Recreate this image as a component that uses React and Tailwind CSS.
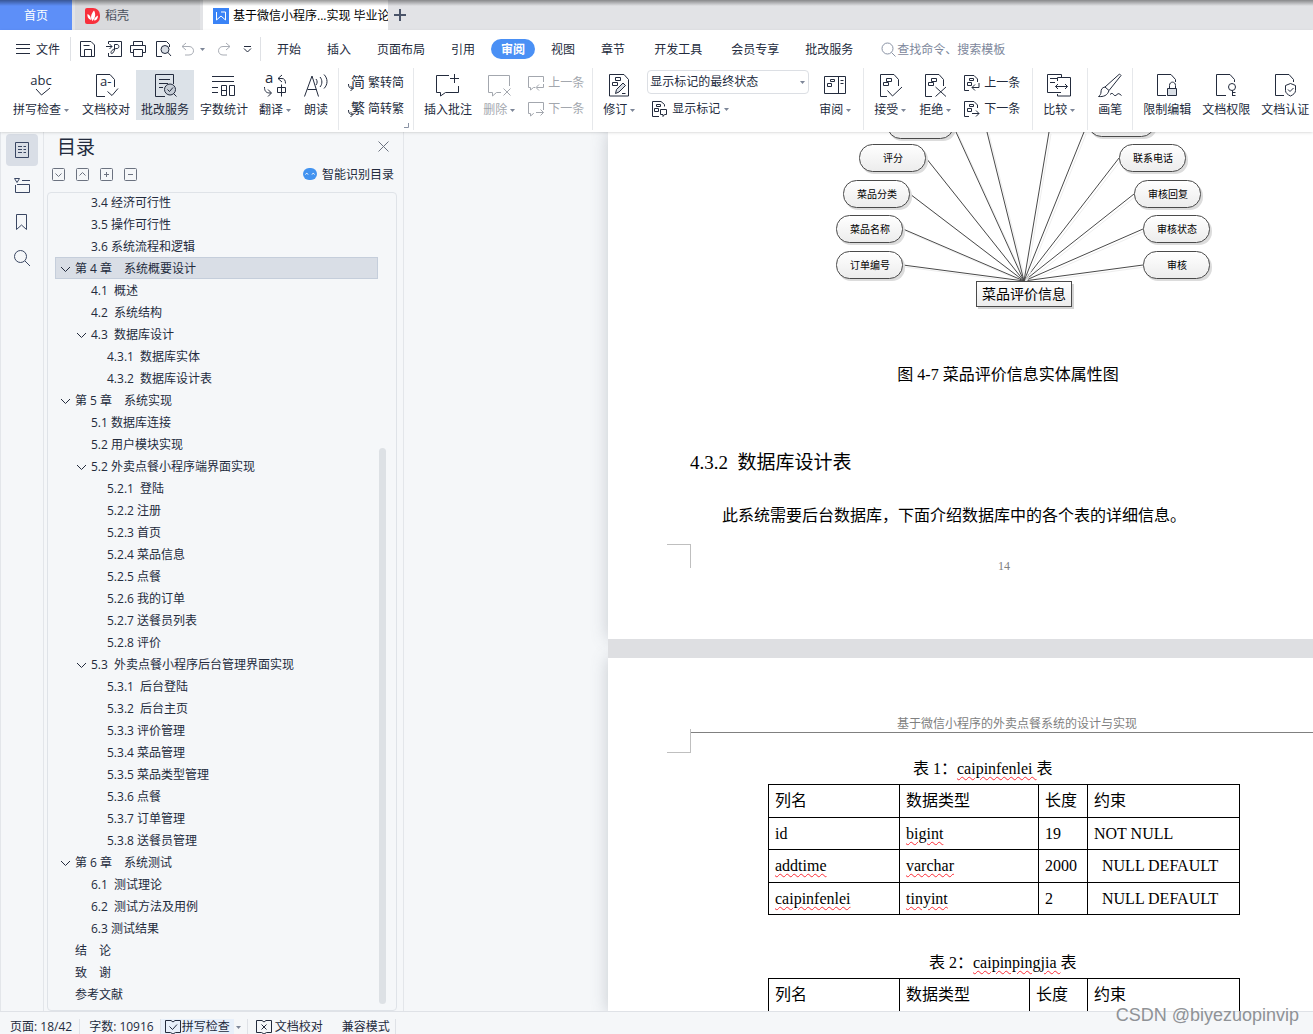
import React from "react";

const outline = [
    { level: 2, text: "3.4 经济可行性" },
    { level: 2, text: "3.5 操作可行性" },
    { level: 2, text: "3.6 系统流程和逻辑" },
    { level: 1, text: "第 4 章　系统概要设计", open: true, active: true },
    { level: 2, text: "4.1  概述" },
    { level: 2, text: "4.2  系统结构" },
    { level: 2, text: "4.3  数据库设计", open: true },
    { level: 3, text: "4.3.1  数据库实体" },
    { level: 3, text: "4.3.2  数据库设计表" },
    { level: 1, text: "第 5 章　系统实现", open: true },
    { level: 2, text: "5.1 数据库连接" },
    { level: 2, text: "5.2 用户模块实现" },
    { level: 2, text: "5.2 外卖点餐小程序端界面实现", open: true },
    { level: 3, text: "5.2.1  登陆" },
    { level: 3, text: "5.2.2 注册" },
    { level: 3, text: "5.2.3 首页" },
    { level: 3, text: "5.2.4 菜品信息" },
    { level: 3, text: "5.2.5 点餐" },
    { level: 3, text: "5.2.6 我的订单" },
    { level: 3, text: "5.2.7 送餐员列表" },
    { level: 3, text: "5.2.8 评价" },
    { level: 2, text: "5.3  外卖点餐小程序后台管理界面实现", open: true },
    { level: 3, text: "5.3.1  后台登陆" },
    { level: 3, text: "5.3.2  后台主页" },
    { level: 3, text: "5.3.3 评价管理" },
    { level: 3, text: "5.3.4 菜品管理" },
    { level: 3, text: "5.3.5 菜品类型管理" },
    { level: 3, text: "5.3.6 点餐" },
    { level: 3, text: "5.3.7 订单管理" },
    { level: 3, text: "5.3.8 送餐员管理" },
    { level: 1, text: "第 6 章　系统测试", open: true },
    { level: 2, text: "6.1  测试理论" },
    { level: 2, text: "6.2  测试方法及用例" },
    { level: 2, text: "6.3 测试结果" },
    { level: 1, text: "结　论" },
    { level: 1, text: "致　谢" },
    { level: 1, text: "参考文献" },
];

const levelPad = { 1: "pl-1", 2: "pl-5", 3: "pl-9" };

const Svg = ({ w = 24, h = 24, className = "", children }) => (
    <svg
        width={w}
        height={h}
        viewBox={`0 0 ${w} ${h}`}
        fill="none"
        stroke="currentColor"
        aria-hidden="true"
        className={`shrink-0 overflow-visible ${className}`}
    >
        {children}
    </svg>
);

const Caret = ({ className = "" }) => (
    <Svg w={5} h={3} className={`text-[#7d8698] ${className}`}>
        <path d="M0 0h5L2.5 3z" fill="currentColor" stroke="none" />
    </Svg>
);

// page with revision bars, shared by several review commands
const RevPage = () => (
    <>
        <path d="M9 23.500H2.500V1.500H16l4.500 5V13" />
        <path d="M8.500 5.500h5v3h-5zM5.500 9.500h5v3h-5z" />
    </>
);

const SmallRevPage = () => (
    <>
        <path d="M5 15.500H.5V.5H10l3.500 3.500v3" />
        <path d="M5.500 3.500h4v2h-4zM3.500 7.500h4v3h-4z" />
    </>
);

const icons = {
    spell: (
        <Svg>
            <text x="12" y="12" textAnchor="middle" fontSize="13" fill="currentColor" stroke="none">abc</text>
            <path d="M7 16l5.500 6L21 15" />
        </Svg>
    ),
    proof: (
        <Svg>
            <path d="M11 23.500H2.500V1.500H16l4.500 5V14M13.500 18.500l4.500 4 6-7" />
            <text x="6" y="13" fontSize="13" fill="currentColor" stroke="none">a-</text>
        </Svg>
    ),
    service: (
        <Svg>
            <path d="M12 23.500H2.500V1.500h18V11M6 6.500h11M6 10.500h9M6 14.500h4" />
            <circle cx="17" cy="16.500" r="5.500" fill="#c5ccd5" />
            <path d="M14.500 16.500l2 2 3.500-4M20.500 20.500l3 3" />
        </Svg>
    ),
    count: (
        <Svg>
            <path d="M0 3.500h22M0 8.500h22M0 14.500h6M0 19.500h6M9.500 12.500h5v10h-5zM9.500 17.500h5M17.500 12.500h5v10h-5z" />
        </Svg>
    ),
    translate: (
        <Svg>
            <text x="2" y="10" fontSize="15" fill="currentColor" stroke="none">a</text>
            <path d="M14.500 14.500h8v5h-8zM18.500 11.500v12M19 2l-4 3.500 4 3.500M15 5.500h4c2.500 0 3.500 2 3.500 5M1.500 14c0 4 1.500 6 5.500 6h1M5 16.500L8.500 20 5 23.500" />
        </Svg>
    ),
    read: (
        <Svg>
            <path d="M.5 23.500L8 3l6.500 20.500M3.500 16.500h9M12 6c1.500 2 1.500 4 0 6M16 4c2.500 3 2.500 7 0 10M20 1.500c4 4 4 10 0 14" />
        </Svg>
    ),
    toSimple: (
        <Svg w={16} h={16}>
            <text x="3" y="12" fontSize="14" fill="currentColor" stroke="none">简</text>
            <path d="M.5 9c0 3 1 4.500 4 4.500M2.500 11L5 13.500 2.500 16" />
        </Svg>
    ),
    toTrad: (
        <Svg w={16} h={16}>
            <text x="3" y="12" fontSize="14" fill="currentColor" stroke="none">繁</text>
            <path d="M.5 9c0 3 1 4.500 4 4.500M2.500 11L5 13.500 2.500 16" />
        </Svg>
    ),
    comment: (
        <Svg>
            <path d="M13 2.500H.5v17h4V23l5-3.500h13V13M14 5.500h9M18.500 1v9" />
        </Svg>
    ),
    removeComment: (
        <Svg>
            <path d="M14 19.500H9.500L5.500 23v-3.500h-4v-17h21V13M16.500 15.500l7 7M23.500 15.500l-7 7" />
        </Svg>
    ),
    prevComment: (
        <Svg w={16} h={16}>
            <path d="M7 12.500H5.500L2.500 15v-2.500H.5V1.500h15V7M15.500 9v3.500h-7M11 9.500l-3 3 3 3" />
        </Svg>
    ),
    nextComment: (
        <Svg w={16} h={16}>
            <path d="M6 12.500H5.500L2.500 15v-2.500H.5V1.500h15V9M8 11.500h7.500M12.500 8.500l3 3-3 3" />
        </Svg>
    ),
    revise: (
        <Svg>
            <path d="M2.500 1.500H17l4.500 5v16.500h-19zM8.500 4.500h5v3h-5zM5.500 9.500h5v3h-5z" />
            <path d="M8.500 20.500l1-4 6.500-6.500 2.500 2.500-6.500 6.500z" fill="#d9dee5" />
            <path d="M15 20.500h3.500" />
        </Svg>
    ),
    showMark: (
        <Svg w={16} h={16}>
            <path d="M7 15.500H.5V.5H9l3.500 3v2M4.500 3.500h4v2h-4zM2.500 7.500h4v3h-4zM8.500 8.500h6v5h-2l-1.500 2v-2H8.500z" />
        </Svg>
    ),
    panes: (
        <Svg>
            <path d="M1.500 3.500h21v17h-21zM15.500 3.500v17M17.500 7.500h3M17.500 10.500h3M7.500 6.500h4v2h-4zM4.500 10.500h4v3h-4z" />
        </Svg>
    ),
    accept: (
        <Svg>
            <RevPage />
            <path d="M9.500 17.500l5 5.500L24 14" />
        </Svg>
    ),
    reject: (
        <Svg>
            <RevPage />
            <path d="M12.500 14l10.500 9.500M23 14L12.500 23.500" />
        </Svg>
    ),
    prevRev: (
        <Svg w={16} h={16}>
            <SmallRevPage />
            <path d="M15 8v4.500H8M11 9.500l-3 3 3 3" />
        </Svg>
    ),
    nextRev: (
        <Svg w={16} h={16}>
            <SmallRevPage />
            <path d="M8 12.500h7M12 9.500l3 3-3 3" />
        </Svg>
    ),
    compare: (
        <Svg>
            <path d="M14 19.500H.5v-18h14v3M3 5.500h8M3 9.500h5M10.500 8v-3.500h13v18.500h-13V21M8.500 13.500h12M11 11l-2.500 2.500L11 16M18 11l2.500 2.500L18 16" />
        </Svg>
    ),
    brush: (
        <Svg>
            <path d="M7 14L21.500 1l1.500 1.500L11 17.500M7 14l4 3.500M7 14c-3 .5-4 2.500-4 5 0 2-1 3.500-2.500 4.500 5 .5 9-1 10.500-6M12 21.500c1.500-1.500 2.500-1.500 3.500 0s2 1.500 3.500 0 2-1 4.500 1" />
        </Svg>
    ),
    lock: (
        <Svg>
            <path d="M11 22.500H2.500V1.500H16l4.500 5V9" />
            <path d="M14.500 15v-2.500c0-4.500 6-4.500 6 0V15" />
            <path d="M12.500 15.500h9v7h-9z" fill="#d9dee5" />
        </Svg>
    ),
    key: (
        <Svg>
            <path d="M12 22.500H2.500V1.500H16l4.500 5V9" />
            <circle cx="18" cy="14" r="3.500" />
            <path d="M18.500 17.500V23M18.500 22.500h3M18.500 19.500h3" />
        </Svg>
    ),
    shield: (
        <Svg>
            <path d="M11 22.500H2.500V1.500H16l4.500 5V9M17.500 10.500l5 2v5c0 2.500-2 4-5 5.500-3-1.500-5-3-5-5.500v-5zM15 16.500l2 2 3.500-3.500" />
        </Svg>
    ),
};

const BigButton = ({ icon, label, menu, active, disabled }) => (
    <button
        type="button"
        disabled={disabled}
        className={`flex h-[50px] shrink-0 flex-col items-center gap-[5px] px-[5px] pt-[3px] ${menu ? "mr-0.5" : ""} ${active ? "bg-[#dce2e8]" : ""} ${disabled ? "text-[#a3a7ae]" : ""}`}
    >
        {icons[icon]}
        <span className="flex items-center gap-[3px] leading-4">
            {label}
            {menu && <Caret />}
        </span>
    </button>
);

const RowButton = ({ icon, label, disabled, menu }) => (
    <button
        type="button"
        disabled={disabled}
        className={`flex h-6 shrink-0 items-center gap-1 ${disabled ? "text-[#a3a7ae]" : ""}`}
    >
        {icons[icon]}
        <span>{label}</span>
        {menu && <Caret />}
    </button>
);

const RowPair = ({ children, className = "pt-px" }) => (
    <div className={`flex flex-col gap-0.5 ${className}`}>{children}</div>
);

const Group = ({ children, last, className = "px-[5px]" }) => (
    <div className={`relative flex h-[62px] shrink-0 gap-px pt-0.5 ${last ? "" : "border-r border-[#e6e8eb]"} ${className}`}>
        {children}
    </div>
);

const TitleTabs = () => (
    <div className="relative flex h-[30px] shrink-0 bg-[#e2e3e6] text-xs">
        <button type="button" className="w-[72px] bg-[#5d8ff8] pt-0.5 text-white">首页</button>
        <button type="button" className="ml-[3px] flex w-[125px] items-center gap-1 bg-[#d9dadd] pl-2.5 pt-0.5 text-[#4a505c]">
            <Svg w={16} h={16}>
                <path d="M0 2a2 2 0 012-2h6a7 7 0 017 7v2a7 7 0 01-7 7H2a2 2 0 01-2-2z" fill="#f8303c" stroke="none" />
                <path d="M7.500 13C5 10 6 6 9 2.500c2 3.500 1.500 7.500-1.500 10.500zM6 12C3 11 2 8.500 2.500 6 5 7 6 9 6 12zM9 12.500c0-2 1.500-4 4-5 0 3-1.500 5-4 5z" fill="#fff" stroke="none" />
            </Svg>
            稻壳
        </button>
        <button type="button" className="ml-[3px] flex w-[185px] items-center gap-1 overflow-hidden bg-white pl-2.5 pt-0.5 text-black">
            <Svg w={16} h={16}>
                <path d="M0 0h16v16H0z" fill="#3a83f6" stroke="none" />
                <path d="M3.500 4v8l4.500-4 4.500 4V4H8" stroke="#fff" />
            </Svg>
            <span className="whitespace-nowrap">基于微信小程序...实现 毕业论文</span>
        </button>
        <button type="button" aria-label="新建标签" className="pl-1.5 text-[#4a5468]">
            <Svg w={12} h={12}>
                <path d="M6 0v12M0 6h12" strokeWidth="2" />
            </Svg>
        </button>
        <div className="absolute inset-x-0 top-0 h-1.5 bg-linear-to-b from-black/40 to-transparent" />
    </div>
);

const MenuBar = () => (
    <div className="flex h-[38px] shrink-0 items-center">
        <button type="button" className="flex items-center gap-1.5 pl-4 pr-2.5">
            <Svg w={14} h={12}>
                <path d="M0 1.500h14M0 5.500h14M0 10.500h14" />
            </Svg>
            <span className="pt-0.5">文件</span>
        </button>
        <div className="flex h-6 items-center border-x border-[#dfe1e5] pl-[9px] pr-2">
            <button type="button" aria-label="保存">
                <Svg w={16} h={16}>
                    <path d="M.5 3v12.500h14V4L11 .5H.5V3M4.500 15V8.500h7V15M3.500 4.500h6" />
                </Svg>
            </button>
            <button type="button" aria-label="输出为PDF" className="ml-2.5">
                <Svg w={16} h={16}>
                    <path d="M2.500 3V.5h13v15h-13V12M0 5.500h6M3.500 3L6 5.500 3.500 8M8.500 9V3.500h2.500c2.500 0 2.500 4 0 4-3 0-6 2-6 4s2 1.500 3.500-2.500" />
                </Svg>
            </button>
            <button type="button" aria-label="打印" className="ml-2">
                <Svg w={16} h={16}>
                    <path d="M3.500 4.500v-4h9v4M3.500 11.500h-3v-7h15v7h-3M3.500 8.500h9v7h-9z" />
                </Svg>
            </button>
            <button type="button" aria-label="打印预览" className="ml-2.5">
                <Svg w={16} h={16}>
                    <path d="M6 15.500H.5V.5h10l3 3V6" />
                    <circle cx="9" cy="8.500" r="4" fill="#d9dee5" />
                    <path d="M12 11.500l3 3.500" />
                </Svg>
            </button>
            <button type="button" aria-label="撤销" className="ml-[9px] flex items-center gap-[5px] text-[#a9adb5]">
                <Svg w={14} h={14}>
                    <path d="M5 1L1 4.500 5 8M1 4.500h7c6 0 6 8.500 0 8.500H4" />
                </Svg>
                <Caret />
            </button>
            <button type="button" aria-label="恢复" className="ml-3 text-[#a9adb5]">
                <Svg w={14} h={14}>
                    <path d="M9 1l4 3.500L9 8M13 4.500H6c-6 0-6 8.500 0 8.500h4" />
                </Svg>
            </button>
            <button type="button" aria-label="自定义" className="ml-3">
                <Svg w={9} h={8}>
                    <path d="M1 1.500h7M1 3.500l3.500 3.500L8 3.500" />
                </Svg>
            </button>
        </div>
        <nav className="flex shrink-0 items-center gap-[26px] whitespace-nowrap pl-4 [&>button]:pt-0.5">
            <button type="button">开始</button>
            <button type="button">插入</button>
            <button type="button">页面布局</button>
            <button type="button">引用</button>
            <button type="button" className="-mx-2.5 h-5 rounded-full bg-[#4a90f5] px-2.5 font-bold leading-4 text-white">审阅</button>
            <button type="button">视图</button>
            <button type="button">章节</button>
            <button type="button" className="mx-[3px]">开发工具</button>
            <button type="button">会员专享</button>
            <button type="button">批改服务</button>
        </nav>
        <label className="ml-7 flex items-center gap-px text-[#8a93a5]">
            <Svg w={15} h={15}>
                <circle cx="6.500" cy="6.500" r="5.500" />
                <path d="M10.500 10.500l4 4" />
            </Svg>
            <input
                type="text"
                aria-label="查找命令"
                placeholder="查找命令、搜索模板"
                className="w-32 bg-transparent pt-0.5 placeholder:text-[#7d879b] focus:outline-none"
            />
        </label>
    </div>
);

const Ribbon = () => (
    <div className="flex h-16 shrink-0 whitespace-nowrap">
        <Group className="pl-2 pr-[5px]">
            <BigButton icon="spell" label="拼写检查" menu />
            <BigButton icon="proof" label="文档校对" />
            <BigButton icon="service" label="批改服务" active />
            <BigButton icon="count" label="字数统计" />
            <BigButton icon="translate" label="翻译" menu />
            <BigButton icon="read" label="朗读" />
        </Group>
        <Group className="pl-[9px] pr-[9px]">
            <RowPair>
                <RowButton icon="toSimple" label="繁转简" />
                <RowButton icon="toTrad" label="简转繁" />
            </RowPair>
            <Svg w={5} h={5} className="absolute bottom-0.5 right-1 text-[#8a93a5]">
                <path d="M4.500 0v4.500H0" />
            </Svg>
        </Group>
        <Group className="pl-[5px] pr-2">
            <BigButton icon="comment" label="插入批注" />
            <BigButton icon="removeComment" label="删除" menu disabled />
            <RowPair className="pl-[5px] pt-px">
                <RowButton icon="prevComment" label="上一条" disabled />
                <RowButton icon="nextComment" label="下一条" disabled />
            </RowPair>
        </Group>
        <Group>
            <BigButton icon="revise" label="修订" menu />
            <RowPair className="pl-1 pr-1">
                <div className="relative h-6">
                    <select
                        aria-label="标记显示方式"
                        className="h-6 w-[162px] appearance-none rounded-sm border border-[#dcdfe4] bg-white pl-0.5"
                    >
                        <option>显示标记的最终状态</option>
                    </select>
                    <Caret className="pointer-events-none absolute right-1 top-[11px]" />
                </div>
                <div className="pl-[5px] pt-px">
                    <RowButton icon="showMark" label="显示标记" menu />
                </div>
            </RowPair>
            <BigButton icon="panes" label="审阅" menu />
        </Group>
        <Group className="pl-[5px] pr-3">
            <BigButton icon="accept" label="接受" menu />
            <BigButton icon="reject" label="拒绝" menu />
            <RowPair className="pl-[5px] pt-px">
                <RowButton icon="prevRev" label="上一条" />
                <RowButton icon="nextRev" label="下一条" />
            </RowPair>
        </Group>
        <Group>
            <BigButton icon="compare" label="比较" menu />
        </Group>
        <Group>
            <BigButton icon="brush" label="画笔" />
        </Group>
        <Group last>
            <BigButton icon="lock" label="限制编辑" />
            <BigButton icon="key" label="文档权限" />
            <BigButton icon="shield" label="文档认证" />
        </Group>
    </div>
);

const SideRail = () => (
    <div className="flex w-11 shrink-0 flex-col items-center gap-1 border-x border-[#e3e6ea] pt-0.5 text-[#3a4763]">
        <button type="button" aria-label="目录" className="flex size-8 items-center justify-center rounded-sm bg-[#d9dee6]">
            <Svg w={16} h={16}>
                <path d="M1.500.5h13v15h-13zM4 4.500h4M9.500 4.500H12M4 7.500h4M9.500 7.500H12M4 10.500h4M9.500 10.500H12" />
            </Svg>
        </button>
        <button type="button" aria-label="章节" className="flex size-8 items-center justify-center">
            <Svg w={16} h={16}>
                <path d="M.5.5h5L3 4.500zM8 2.500h8M1.500 7v7.500h14v-8H3" />
            </Svg>
        </button>
        <button type="button" aria-label="书签" className="flex size-8 items-center justify-center">
            <Svg w={16} h={18}>
                <path d="M2.500 1.500h10v15l-5-4.500-5 4.500z" />
            </Svg>
        </button>
        <button type="button" aria-label="查找" className="flex size-8 items-center justify-center">
            <Svg w={16} h={16}>
                <circle cx="6.500" cy="6.500" r="6" />
                <path d="M11 11l5 5" />
            </Svg>
        </button>
    </div>
);

const BoxButton = ({ label, d }) => (
    <button type="button" aria-label={label} className="text-[#6b7280]">
        <Svg w={13} h={13}>
            <rect x=".5" y=".5" width="12" height="12" rx="1" />
            <path d={d} />
        </Svg>
    </button>
);

const OutlinePanel = () => (
    <aside className="flex w-[360px] shrink-0 flex-col border-r border-[#e3e6ea] pl-[3px] pr-1.5">
        <div className="flex h-7 items-center justify-between pl-2.5 pr-2">
            <h2 className="pt-1 text-[19px]">目录</h2>
            <button type="button" aria-label="关闭" className="text-[#6b7280]">
                <Svg w={11} h={11}>
                    <path d="M.5.5l10 10M10.500.5l-10 10" />
                </Svg>
            </button>
        </div>
        <div className="flex h-8 items-center gap-[11px] pb-1 pl-[5px] pr-[3px]">
            <BoxButton label="展开" d="M3.500 5.500l3 3 3-3" />
            <BoxButton label="收起" d="M3.500 7.500l3-3 3 3" />
            <BoxButton label="增加级别" d="M4 6.500h5M6.500 4v5" />
            <BoxButton label="减少级别" d="M4 6.500h5" />
            <button type="button" className="ml-auto flex items-center gap-[5px]">
                <Svg w={14} h={12}>
                    <rect x="0" y="0" width="14" height="12" rx="6" fill="#4293f0" stroke="none" />
                    <path d="M2.500 6.500c.5-1.500 2-1.500 2.500 0M9 6.500c.5-1.500 2-1.500 2.500 0" stroke="#fff" />
                </Svg>
                <span className="pt-px">智能识别目录</span>
            </button>
        </div>
        <div className="relative min-h-0 flex-1 overflow-hidden rounded-sm border border-[#dfe3e8] pl-[7px] pr-[18px]">
            <ul className="-mt-0.5">
                {outline.map((item) => (
                    <li key={item.text}>
                        <button
                            type="button"
                            className={`flex h-[22px] w-full items-center gap-1 whitespace-pre border pt-0.5 ${levelPad[item.level]} ${item.active ? "border-[#c5cedb] bg-[#d9dee6]" : "border-transparent"}`}
                        >
                            <Svg w={11} h={7} className={item.open ? "" : "invisible"}>
                                <path d="M1 1l4.500 4.500L10 1" />
                            </Svg>
                            {item.text}
                        </button>
                    </li>
                ))}
            </ul>
            <div className="absolute bottom-1.5 right-2.5 h-[68%] w-[7px] rounded-full bg-[#dde1e5]" />
        </div>
    </aside>
);

const nodes = [
    { x: 887, y: 111, label: "" },
    { x: 1088, y: 109, label: "" },
    { x: 859, y: 144, label: "评分" },
    { x: 843, y: 180, label: "菜品分类" },
    { x: 836, y: 215, label: "菜品名称" },
    { x: 836, y: 251, label: "订单编号" },
    { x: 1119, y: 144, label: "联系电话" },
    { x: 1134, y: 180, label: "审核回复" },
    { x: 1143, y: 215, label: "审核状态" },
    { x: 1143, y: 251, label: "审核" },
];

const links = [
    [926, 158], [910, 194], [903, 229], [903, 265],
    [1119, 158], [1134, 194], [1143, 229], [1143, 265],
    [956, 132], [987, 132], [1049, 132], [1084, 132],
];

const EntityDiagram = () => (
    <svg width="390" height="181" viewBox="830 132 390 181" className="ml-[140px] block">
        <defs>
            <linearGradient id="nodeFill" x1="0" y1="0" x2="0" y2="1">
                <stop offset="0" stopColor="#ffffff" />
                <stop offset="1" stopColor="#ececec" />
            </linearGradient>
        </defs>
        {links.map(([x, y]) => (
            <g key={`${x}-${y}`}>
                <path d={`M${x + 2} ${y + 2}L1026 283`} stroke="#eeeeee" />
                <path d={`M${x} ${y}L1024 281`} stroke="#4a4a4a" />
            </g>
        ))}
        {nodes.map((n) => (
            <g key={`${n.x}-${n.y}`}>
                <rect x={n.x + 2} y={n.y + 3} width="67" height="27" rx="13" fill="#dcdcdc" />
                <rect x={n.x + 0.5} y={n.y + 0.5} width="66" height="27" rx="13" fill="url(#nodeFill)" stroke="#4a4a4a" />
                {n.label && (
                    <text x={n.x + 34} y={n.y + 18} textAnchor="middle" fontSize="10">{n.label}</text>
                )}
            </g>
        ))}
        <rect x="978" y="284" width="96" height="25" fill="#d4d4d4" />
        <rect x="976.500" y="281.500" width="95" height="25" fill="url(#nodeFill)" stroke="#4a4a4a" />
        <text x="1024" y="299" textAnchor="middle" fontSize="14">菜品评价信息</text>
    </svg>
);

const Misspelt = ({ children }) => (
    <span className="underline decoration-red-500 decoration-wavy decoration-1 underline-offset-2">{children}</span>
);

const Paper = ({ children }) => (
    <section className="relative w-[794px] shrink-0 bg-white pl-[82px] pr-[76px] shadow-[0_0_16px_rgba(90,100,115,0.3)]">
        {children}
    </section>
);

const cell = "border border-black px-1.5 text-left font-normal whitespace-pre";

const FieldTable = ({ cols, rows = [] }) => (
    <table className="ml-[78px] w-[471px] table-fixed border-collapse">
        <colgroup>
            {cols.map((c, i) => (
                <col key={i} className={c} />
            ))}
        </colgroup>
        <thead>
            <tr className="h-[33px]">
                <th className={cell}>列名</th>
                <th className={cell}>数据类型</th>
                <th className={cell}>长度</th>
                <th className={cell}>约束</th>
            </tr>
        </thead>
        <tbody>
            {rows.map(([name, type, size, rule]) => (
                <tr key={name} className="h-[33px] odd:h-8">
                    <td className={cell}>{name === "id" ? name : <Misspelt>{name}</Misspelt>}</td>
                    <td className={cell}><Misspelt>{type}</Misspelt></td>
                    <td className={cell}>{size}</td>
                    <td className={cell}>{rule}</td>
                </tr>
            ))}
        </tbody>
    </table>
);

const DocumentView = () => (
    <main className="flex min-w-0 flex-1 flex-col overflow-hidden pl-[204px] font-['Liberation_Serif','Noto_Sans_CJK_SC',serif] text-base leading-6 text-black">
        <Paper>
            <EntityDiagram />
            <p className="mt-[50px] text-center">图 4-7 菜品评价信息实体属性图</p>
            <h3 className="mt-16 whitespace-pre text-[19px]">4.3.2  数据库设计表</h3>
            <p className="mt-[29px] indent-8">此系统需要后台数据库，下面介绍数据库中的各个表的详细信息。</p>
            <div className="absolute bottom-[71px] left-[59px] size-6 border-r border-t border-[#bfbfbf]" />
            <p className="mt-[26px] pb-[61px] pr-2 text-center text-xs leading-6 text-[#808080]">14</p>
        </Paper>
        <div className="z-10 h-[19px] w-[794px] shrink-0 bg-[#dedfe2]" />
        <Paper>
            <div className="absolute left-[59px] top-[71px] size-6 border-b border-r border-[#bfbfbf]" />
            <header className="border-b border-[#808080] pl-[18px] pt-[58px] text-center text-xs leading-4 text-[#808080]">
                基于微信小程序的外卖点餐系统的设计与实现
            </header>
            <p className="ml-[223px] mt-6">表 1：<Misspelt>caipinfenlei </Misspelt>表</p>
            <div className="mt-[3px]">
                <FieldTable
                    cols={["w-[131px]", "w-[139px]", "w-[49px]", "w-[152px]"]}
                    rows={[
                        ["id", "bigint", "19", "NOT NULL"],
                        ["addtime", "varchar", "2000", "  NULL DEFAULT"],
                        ["caipinfenlei", "tinyint", "2", "  NULL DEFAULT"],
                    ]}
                />
            </div>
            <p className="ml-[239px] mt-9">表 2：<Misspelt>caipinpingjia </Misspelt>表</p>
            <div className="mt-[3px]">
                <FieldTable cols={["w-[131px]", "w-[130px]", "w-[58px]", "w-[152px]"]} />
            </div>
        </Paper>
    </main>
);

const StatusBar = () => (
    <footer className="relative z-10 flex h-[23px] shrink-0 items-center whitespace-nowrap border-t border-[#dfe2e7] bg-[#f5f7f9] pl-2.5 pt-2">
        <span className="border-r border-[#dfe2e7] pr-[7px]">页面: 18/42</span>
        <span className="border-r border-[#dfe2e7] pl-[9px] pr-1.5">字数: 10916</span>
        <button type="button" className="flex items-center gap-px bg-[#e8f0fa] px-1">
            <Svg w={16} h={14}>
                <path d="M6 .5H.5v12h5L8 14l2.500-1.500h5V.5H10L8 2 6 .5M4.500 6.500l3 3 4.500-5" />
            </Svg>
            拼写检查
        </button>
        <span className="flex h-4 items-center border-r border-[#dfe2e7] pl-0.5 pr-1.5"><Caret /></span>
        <button type="button" className="flex items-center gap-[3px] pl-2">
            <Svg w={16} h={14}>
                <path d="M6 .5H.5v12h5L8 14l2.500-1.500h5V.5H10L8 2 6 .5M5.500 4.500l5 5M10.500 4.500l-5 5" />
            </Svg>
            文档校对
        </button>
        <span className="ml-[19px] border-r border-[#dfe2e7] pr-[5px]">兼容模式</span>
        <div className="pointer-events-none absolute -top-[9px] right-3.5 font-['Liberation_Sans',sans-serif] text-[18px] leading-6 text-[#8f9296]">
            CSDN @biyezuopinvip
        </div>
    </footer>
);

export default function App() {
    return (
        <div className="flex h-screen flex-col overflow-hidden bg-[#f5f7f9] font-['Open_Sans','Noto_Sans_CJK_SC',sans-serif] text-xs text-[#232b3d]">
            <TitleTabs />
            <div className="z-10 bg-white shadow-sm">
                <MenuBar />
                <Ribbon />
            </div>
            <div className="flex min-h-0 flex-1">
                <SideRail />
                <OutlinePanel />
                <DocumentView />
            </div>
            <StatusBar />
        </div>
    );
}
